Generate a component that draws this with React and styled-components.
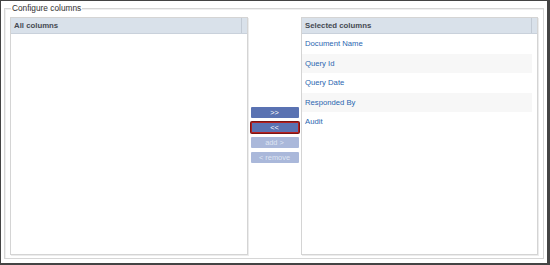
import React from 'react';
import styled, { createGlobalStyle } from 'styled-components';

const GlobalStyle = createGlobalStyle`
  html, body {
    margin: 0;
    padding: 0;
    background: #ffffff;
  }
  body {
    font-family: "Liberation Sans", Arial, sans-serif;
  }
`;

const selected = ['Document Name', 'Query Id', 'Query Date', 'Responded By', 'Audit'];

const buttons = [
  { label: '>>', disabled: false, focused: false },
  { label: '<<', disabled: false, focused: true },
  { label: 'add >', disabled: true, focused: false },
  { label: '< remove', disabled: true, focused: false },
];

export default function App() {
  return (
    <>
      <GlobalStyle />
      <Frame>
        <Fieldset>
          <Legend>Configure columns</Legend>
          <Columns>
            <Panel>
              <Header>
                <HeaderCell>All columns</HeaderCell>
                <Gutter />
              </Header>
              <List />
            </Panel>
            <Actions>
              {buttons.map((b) => (
                <MoveButton key={b.label} disabled={b.disabled} $focused={b.focused}>
                  {b.label}
                </MoveButton>
              ))}
            </Actions>
            <Panel>
              <Header>
                <HeaderCell>Selected columns</HeaderCell>
                <Gutter />
              </Header>
              <List>
                {selected.map((name, i) => (
                  <Row key={name} $striped={i % 2 === 1}>{name}</Row>
                ))}
              </List>
            </Panel>
          </Columns>
        </Fieldset>
      </Frame>
    </>
  );
}

const Frame = styled.div`
  width: 550px;
  height: 265px;
  box-sizing: border-box;
  border-style: solid;
  border-color: #444444;
  border-width: 1px 3px 2px 1px;
  padding: 1px 3px 4px 3px;
  display: flex;
`;

const Fieldset = styled.fieldset`
  flex: 1;
  margin: 0;
  padding: 3px 4px 3px 5px;
  border: 1px solid #d6d6d6;
  box-shadow: inset 1px 1px 0 #f0f0f0;
  display: flex;
  flex-direction: column;
  min-width: 0;
`;

const Legend = styled.legend`
  padding: 0 1px;
  margin-left: 1px;
  font-size: 8.3px;
  line-height: 12px;
  color: #333333;
`;

const Columns = styled.div`
  flex: 1;
  display: grid;
  grid-template-columns: 238px 53px 237px;
  min-height: 0;
`;

const Panel = styled.div`
  border: 1px solid #d4d4d4;
  box-shadow: 1px 1px 0 #ececec;
  display: flex;
  flex-direction: column;
  background: #ffffff;
`;

const Header = styled.div`
  display: flex;
  height: 15px;
  background: #d9e1ea;
  border-bottom: 1px solid #c9d1db;
`;

const HeaderCell = styled.div`
  flex: 1;
  padding-left: 3px;
  font-size: 7.8px;
  font-weight: bold;
  line-height: 15px;
  color: #454a52;
  border-right: 1px solid #c2cad4;
`;

const Gutter = styled.div`
  width: 5px;
`;

const List = styled.div`
  flex: 1;
  padding-right: 5px;
`;

const Row = styled.div`
  height: 19.5px;
  line-height: 19px;
  padding-left: 3px;
  font-size: 7.7px;
  color: #2a66b0;
  background: ${(p) => (p.$striped ? '#f7f7f7' : 'transparent')};
`;

const Actions = styled.div`
  display: flex;
  flex-direction: column;
  justify-content: center;
  align-items: center;
  gap: 4px;
  padding-bottom: 2px;
`;

const MoveButton = styled.button`
  width: 48px;
  height: 11px;
  padding: 0;
  margin: 0;
  box-sizing: border-box;
  border: ${(p) => (p.$focused ? '1px solid #b52020' : 'none')};
  box-shadow: ${(p) => (p.$focused ? '0 0 0 1px #7a1414' : 'none')};
  border-radius: 1px;
  background: ${(p) => (p.disabled ? '#aab8da' : '#5a72b2')};
  color: ${(p) => (p.disabled ? '#dfe5f2' : '#ffffff')};
  font-family: "Liberation Sans", Arial, sans-serif;
  font-size: 7.4px;
  line-height: 9px;
  outline: none;
`;
